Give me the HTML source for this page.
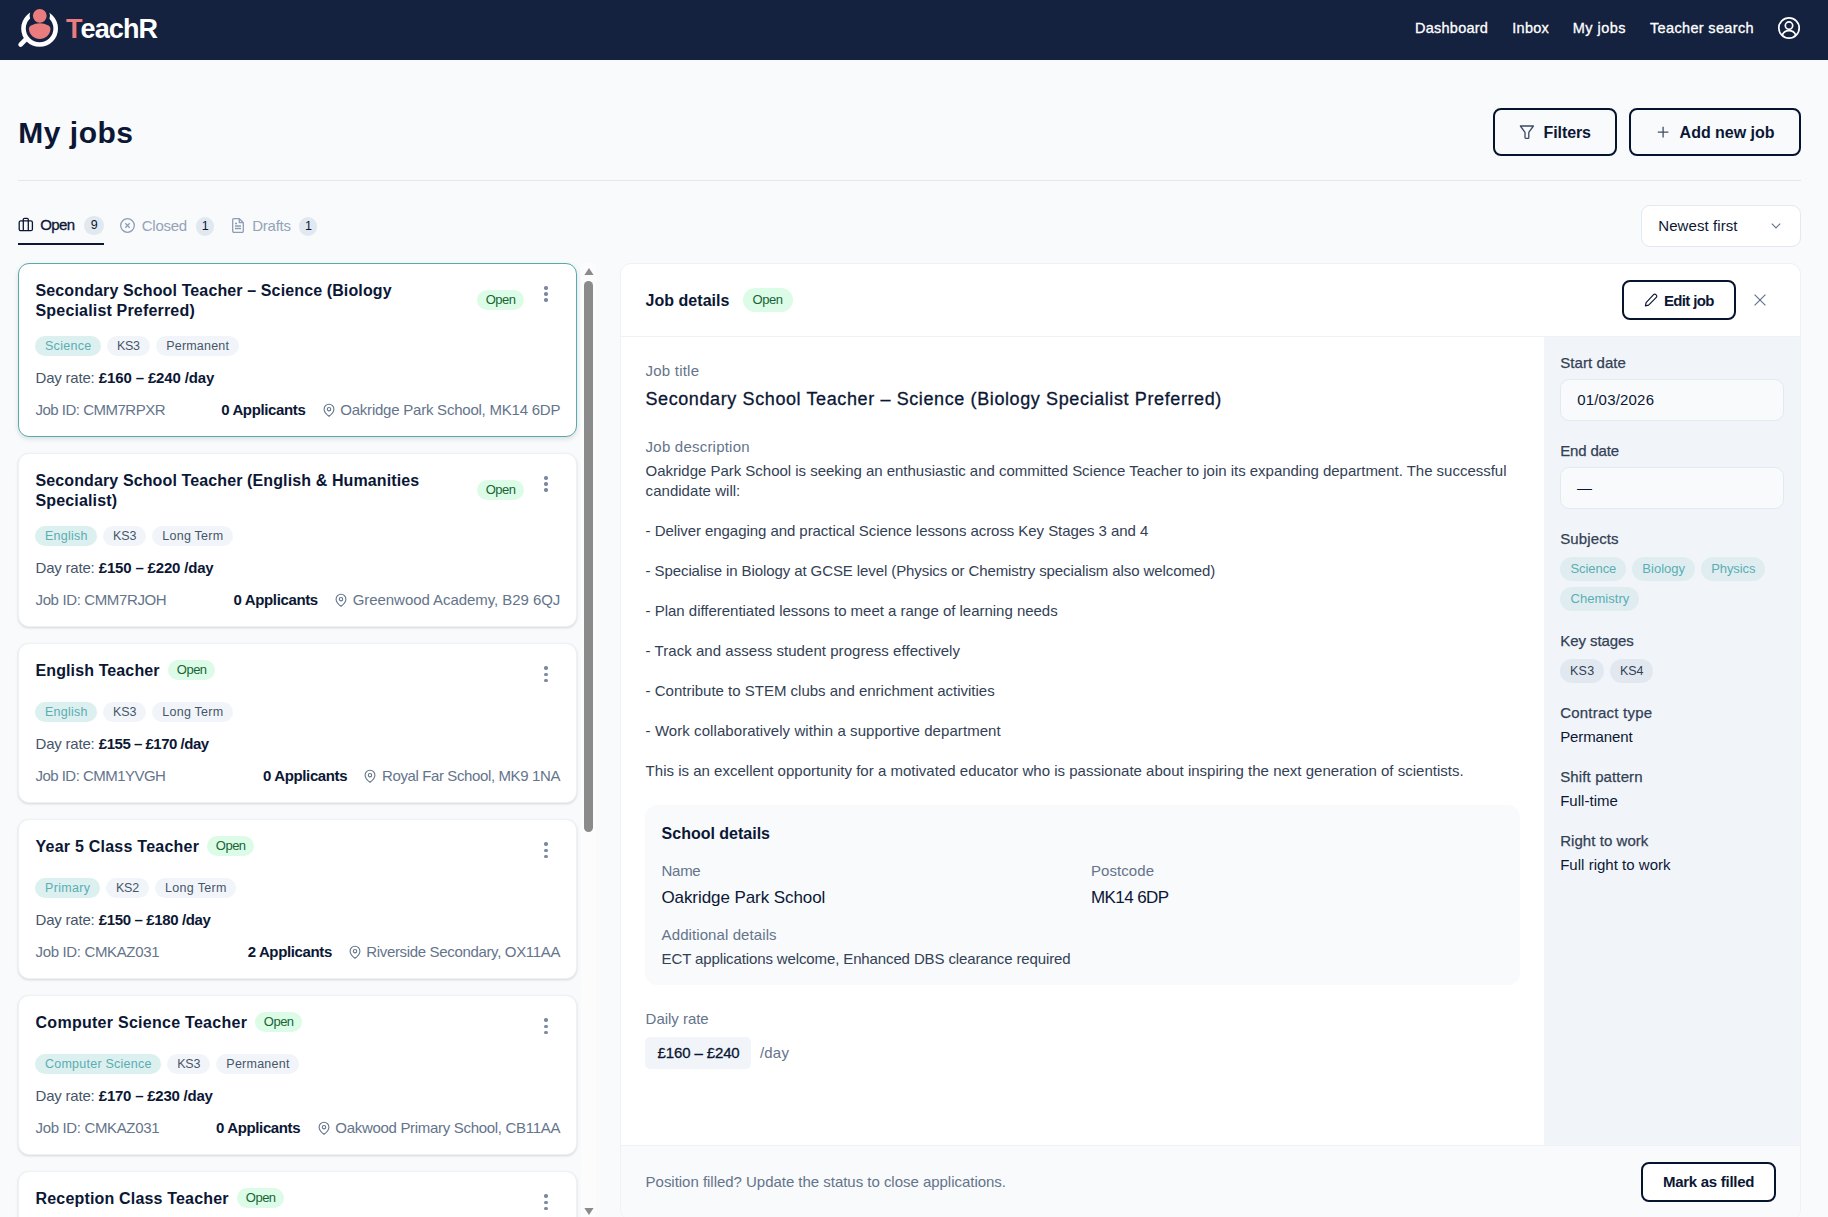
<!DOCTYPE html>
<html lang="en"><head><meta charset="utf-8"><title>TeachR – My jobs</title>
<style>
*{box-sizing:border-box;margin:0;padding:0}
html,body{width:1828px;height:1217px;overflow:hidden;background:#f8fafc}
body{position:relative;font-family:"Liberation Sans",Arial,sans-serif;color:#0b1735;font-size:15px;line-height:20px}
.b,.t,.card,.dot{position:absolute;display:block}
.t{white-space:nowrap;line-height:20px}
.pill{border-radius:12px}
.dot{width:3.400px;height:3.400px;border-radius:50%;background:#7c88a0}
nav{position:absolute;left:0;top:0;width:1828px;height:60px;background:#14213f}
.btn{border:2px solid #06132f;border-radius:8px;background:#f8fafc}
.card{width:559px;background:#fff;border:1px solid #eef2f6;border-radius:11px;box-shadow:0 1px 3px rgba(15,23,42,.10),0 1px 2px rgba(15,23,42,.05)}
.card.sel{border:1px solid #58abab;box-shadow:0 2px 5px rgba(15,23,42,.12)}
svg{overflow:visible}
</style></head><body>

<nav>
<svg class="b" style="left:14px;top:4px" width="50" height="50" viewBox="0 0 50 50">
<circle cx="25.6" cy="24.4" r="16.1" fill="none" stroke="#fff" stroke-width="4.6"/>
<path d="M11.5 35.6 L6.6 40.6" stroke="#fff" stroke-width="4.6" stroke-linecap="round"/>
<circle cx="25.8" cy="11.8" r="10.2" fill="#14213f"/>
<circle cx="25.8" cy="11.8" r="6.9" fill="#ea7c7e"/>
<path d="M17 21.400 Q25.800 17 34.500 21.400 C36.400 22.600 36.600 24 36.400 25.600 C36 31 31.500 35 25.800 35 C20 35 15.500 31 15 25.600 C14.800 24 15 22.600 17 21.400Z" fill="#ea7c7e"/>
</svg>
<span class="t" style="left:66.00px;top:19.00px;font-size:27px;font-weight:700;color:#ea7c7e;">T</span>
<span class="t" style="left:80.60px;top:19.00px;font-size:27px;font-weight:700;color:#ffffff;letter-spacing:-0.912px;">eachR</span>
<span class="t" style="left:1415.00px;top:18.00px;font-size:14.5px;color:#ffffff;letter-spacing:0.245px;-webkit-text-stroke:.3px #fff;">Dashboard</span>
<span class="t" style="left:1512.20px;top:18.00px;font-size:14.5px;color:#ffffff;letter-spacing:0.304px;-webkit-text-stroke:.3px #fff;">Inbox</span>
<span class="t" style="left:1572.70px;top:18.00px;font-size:14.5px;color:#ffffff;letter-spacing:0.489px;-webkit-text-stroke:.3px #fff;">My jobs</span>
<span class="t" style="left:1650.00px;top:18.00px;font-size:14.5px;color:#ffffff;letter-spacing:0.343px;-webkit-text-stroke:.3px #fff;">Teacher search</span>
<svg class="b" style="left:1777px;top:16px" width="24" height="24" viewBox="0 0 24 24" fill="none" stroke="#fff" stroke-width="1.7">
<circle cx="12" cy="12" r="10.2"/><circle cx="12" cy="9.6" r="3.7"/><path d="M5.2 19.4c1.2-3.2 3.8-4.7 6.8-4.7s5.600 1.500 6.800 4.700"/></svg>
</nav>
<span class="t" style="left:18.30px;top:123.00px;font-size:30px;font-weight:700;letter-spacing:0.502px;">My jobs</span>
<div class="b btn" style="left:1493.00px;top:108.00px;width:124.00px;height:48.00px;"></div>
<svg class="b" style="left:1519px;top:124px" width="16" height="16" viewBox="0 0 16 16" fill="none" stroke="#3c4963" stroke-width="1.300" stroke-linejoin="round">
<path d="M1.400 2h13l-4.600 6.300v5.100a.9.9 0 0 1-.9.9h-2a.9.9 0 0 1-.9-.9v-5.100z"/></svg>
<span class="t" style="left:1543.60px;top:123.00px;font-size:16px;font-weight:700;letter-spacing:-0.103px;">Filters</span>
<div class="b btn" style="left:1629.00px;top:108.00px;width:172.00px;height:48.00px;"></div>
<svg class="b" style="left:1657px;top:126px" width="12" height="12" viewBox="0 0 12 12" stroke="#414e67" stroke-width="1.300"><path d="M6.100.8v10.600M.8 6.100h10.600"/></svg>
<span class="t" style="left:1679.60px;top:123.00px;font-size:16px;font-weight:700;letter-spacing:-0.021px;">Add new job</span>
<div class="b" style="left:18.00px;top:180.00px;width:1783.00px;height:1.00px;background:#e2e8f0"></div>
<svg class="b" style="left:18px;top:217px" width="16" height="15" viewBox="0 0 16 15" fill="none" stroke="#0b1735" stroke-width="1.300" stroke-linejoin="round">
<rect x="1.200" y="3.900" width="13.200" height="9.800" rx="1.500"/><path d="M5.300 13.700V2.500a1.200 1.200 0 0 1 1.200-1.200h2.600a1.200 1.200 0 0 1 1.200 1.200V13.700"/></svg>
<span class="t" style="left:40.20px;top:215.00px;font-size:15px;letter-spacing:-0.568px;-webkit-text-stroke:.3px #0b1735;">Open</span>
<div class="b pill" style="left:84.30px;top:215.50px;width:19.50px;height:19.20px;background:#e2e8f0"></div>
<span class="t" style="left:90.80px;top:215.00px;font-size:12.5px;">9</span>
<div class="b" style="left:18.00px;top:243.20px;width:86.00px;height:2.10px;background:#0b1735"></div>
<svg class="b" style="left:120px;top:218.300px" width="15" height="15" viewBox="0 0 15 15" fill="none" stroke="#8e9db3" stroke-width="1.300">
<circle cx="7.5" cy="7.5" r="6.8"/><path d="M5.300 5.300l4.400 4.400M9.700 5.300l-4.400 4.400"/></svg>
<span class="t" style="left:141.80px;top:216.00px;font-size:15px;color:#94a3b8;letter-spacing:-0.261px;">Closed</span>
<div class="b pill" style="left:195.80px;top:216.50px;width:18.40px;height:19.20px;background:#e2e8f0"></div>
<span class="t" style="left:201.80px;top:216.00px;font-size:12.5px;">1</span>
<svg class="b" style="left:232px;top:218px" width="12" height="15" viewBox="0 0 12 15" fill="none" stroke="#8e9db3" stroke-width="1.300" stroke-linejoin="round">
<path d="M.7 1.900a1.200 1.200 0 0 1 1.200-1.200h5.400l4 4v8.400a1.200 1.200 0 0 1-1.200 1.200H1.900a1.200 1.200 0 0 1-1.200-1.200z"/><path d="M7.300.7v4h4M3 8h6M3 10.500h6M3 5.500h2"/></svg>
<span class="t" style="left:252.30px;top:216.00px;font-size:15px;color:#94a3b8;letter-spacing:-0.263px;">Drafts</span>
<div class="b pill" style="left:299.30px;top:216.50px;width:18.00px;height:19.20px;background:#e2e8f0"></div>
<span class="t" style="left:305.00px;top:216.00px;font-size:12.5px;">1</span>
<div class="b" style="left:1641.00px;top:205.00px;width:160.00px;height:42.00px;background:#fff;border:1px solid #e3e9f0;border-radius:9px"></div>
<span class="t" style="left:1658.30px;top:216.00px;font-size:15px;letter-spacing:0.076px;">Newest first</span>
<svg class="b" style="left:1771px;top:222px" width="10" height="8" viewBox="0 0 10 8" fill="none" stroke="#64748b" stroke-width="1.1"><path d="M.8 1.600L5 6l4.200-4.400"/></svg>
<div class="b" style="left:18px;top:263px;width:580px;height:954px">
<div class="card sel" style="left:0;top:0.00px;height:174.00px;"><span class="t" style="left:16.50px;top:17.00px;font-size:16px;font-weight:700;letter-spacing:0.123px;">Secondary School Teacher – Science (Biology</span><span class="t" style="left:16.50px;top:37.00px;font-size:16px;font-weight:700;letter-spacing:0.179px;">Specialist Preferred)</span><div class="b pill" style="left:458.20px;top:26.00px;width:46.70px;height:20.00px;background:#dcfce7;"></div><span class="t" style="left:466.70px;top:26.00px;font-size:13px;color:#166534;letter-spacing:-0.504px;">Open</span><i class="dot" style="left:525.30px;top:22.30px"></i><i class="dot" style="left:525.30px;top:28.30px"></i><i class="dot" style="left:525.30px;top:34.30px"></i><div class="b pill" style="left:16.00px;top:72.40px;width:65.80px;height:19.40px;background:#dbf0ef;"></div><span class="t" style="left:26.00px;top:72.00px;font-size:12.5px;color:#5badb3;letter-spacing:0.286px;">Science</span><div class="b pill" style="left:88.10px;top:72.40px;width:42.50px;height:19.40px;background:#f1f5f9;"></div><span class="t" style="left:98.10px;top:72.00px;font-size:12.5px;color:#475569;letter-spacing:-0.370px;">KS3</span><div class="b pill" style="left:137.20px;top:72.40px;width:82.40px;height:19.40px;background:#f1f5f9;"></div><span class="t" style="left:147.20px;top:72.00px;font-size:12.5px;color:#475569;letter-spacing:0.205px;">Permanent</span><span class="t" style="left:16.50px;top:104.00px;font-size:15px;color:#475569;letter-spacing:-0.207px;">Day rate:</span><span class="t" style="left:79.80px;top:104.00px;font-size:15px;font-weight:700;letter-spacing:-0.134px;">£160 – £240 /day</span><span class="t" style="left:16.50px;top:136.00px;font-size:15px;color:#64748b;letter-spacing:-0.502px;">Job ID: CMM7RPXR</span><span class="t" style="left:202.20px;top:136.00px;font-size:15px;font-weight:700;letter-spacing:-0.367px;">0 Applicants</span><svg class="b" style="left:303.70px;top:139.70px" width="12" height="13" viewBox="0 0 12 13" fill="none" stroke="#64748b" stroke-width="1.1"><path d="M6 12.3C6 12.3 1.1 8.6 1.1 5.2a4.9 4.9 0 0 1 9.8 0C10.900 8.600 6 12.300 6 12.300Z"/><circle cx="6" cy="5.2" r="1.7"/></svg><span class="t" style="left:321.30px;top:136.00px;font-size:15px;color:#64748b;letter-spacing:-0.230px;">Oakridge Park School, MK14 6DP</span></div>
<div class="card" style="left:0;top:190.00px;height:174.00px;"><span class="t" style="left:16.50px;top:17.00px;font-size:16px;font-weight:700;letter-spacing:0.116px;">Secondary School Teacher (English &amp; Humanities</span><span class="t" style="left:16.50px;top:37.00px;font-size:16px;font-weight:700;letter-spacing:0.147px;">Specialist)</span><div class="b pill" style="left:458.20px;top:26.00px;width:46.70px;height:20.00px;background:#dcfce7;"></div><span class="t" style="left:466.70px;top:26.00px;font-size:13px;color:#166534;letter-spacing:-0.504px;">Open</span><i class="dot" style="left:525.30px;top:22.30px"></i><i class="dot" style="left:525.30px;top:28.30px"></i><i class="dot" style="left:525.30px;top:34.30px"></i><div class="b pill" style="left:16.00px;top:72.40px;width:62.00px;height:19.40px;background:#dbf0ef;"></div><span class="t" style="left:26.00px;top:72.00px;font-size:12.5px;color:#5badb3;letter-spacing:0.233px;">English</span><div class="b pill" style="left:84.00px;top:72.40px;width:43.00px;height:19.40px;background:#f1f5f9;"></div><span class="t" style="left:94.00px;top:72.00px;font-size:12.5px;color:#475569;letter-spacing:-0.120px;">KS3</span><div class="b pill" style="left:133.30px;top:72.40px;width:80.40px;height:19.40px;background:#f1f5f9;"></div><span class="t" style="left:143.30px;top:72.00px;font-size:12.5px;color:#475569;letter-spacing:0.245px;">Long Term</span><span class="t" style="left:16.50px;top:104.00px;font-size:15px;color:#475569;letter-spacing:-0.207px;">Day rate:</span><span class="t" style="left:79.80px;top:104.00px;font-size:15px;font-weight:700;letter-spacing:-0.181px;">£150 – £220 /day</span><span class="t" style="left:16.50px;top:136.00px;font-size:15px;color:#64748b;letter-spacing:-0.366px;">Job ID: CMM7RJOH</span><span class="t" style="left:214.60px;top:136.00px;font-size:15px;font-weight:700;letter-spacing:-0.367px;">0 Applicants</span><svg class="b" style="left:315.70px;top:139.70px" width="12" height="13" viewBox="0 0 12 13" fill="none" stroke="#64748b" stroke-width="1.1"><path d="M6 12.3C6 12.3 1.1 8.6 1.1 5.2a4.9 4.9 0 0 1 9.8 0C10.900 8.600 6 12.300 6 12.300Z"/><circle cx="6" cy="5.2" r="1.7"/></svg><span class="t" style="left:333.70px;top:136.00px;font-size:15px;color:#64748b;letter-spacing:-0.053px;">Greenwood Academy, B29 6QJ</span></div>
<div class="card" style="left:0;top:380.00px;height:160.00px;"><span class="t" style="left:16.50px;top:17.00px;font-size:16px;font-weight:700;letter-spacing:0.114px;">English Teacher</span><div class="b pill" style="left:149.30px;top:16.00px;width:46.70px;height:20.00px;background:#dcfce7;"></div><span class="t" style="left:157.80px;top:16.00px;font-size:13px;color:#166534;letter-spacing:-0.504px;">Open</span><i class="dot" style="left:525.30px;top:22.30px"></i><i class="dot" style="left:525.30px;top:28.60px"></i><i class="dot" style="left:525.30px;top:34.80px"></i><div class="b pill" style="left:16.00px;top:58.40px;width:62.00px;height:19.40px;background:#dbf0ef;"></div><span class="t" style="left:26.00px;top:58.00px;font-size:12.5px;color:#5badb3;letter-spacing:0.233px;">English</span><div class="b pill" style="left:84.00px;top:58.40px;width:43.00px;height:19.40px;background:#f1f5f9;"></div><span class="t" style="left:94.00px;top:58.00px;font-size:12.5px;color:#475569;letter-spacing:-0.120px;">KS3</span><div class="b pill" style="left:133.30px;top:58.40px;width:80.40px;height:19.40px;background:#f1f5f9;"></div><span class="t" style="left:143.30px;top:58.00px;font-size:12.5px;color:#475569;letter-spacing:0.245px;">Long Term</span><span class="t" style="left:16.50px;top:90.00px;font-size:15px;color:#475569;letter-spacing:-0.207px;">Day rate:</span><span class="t" style="left:79.80px;top:90.00px;font-size:15px;font-weight:700;letter-spacing:-0.481px;">£155 – £170 /day</span><span class="t" style="left:16.50px;top:122.00px;font-size:15px;color:#64748b;letter-spacing:-0.532px;">Job ID: CMM1YVGH</span><span class="t" style="left:244.00px;top:122.00px;font-size:15px;font-weight:700;letter-spacing:-0.367px;">0 Applicants</span><svg class="b" style="left:345.00px;top:125.70px" width="12" height="13" viewBox="0 0 12 13" fill="none" stroke="#64748b" stroke-width="1.1"><path d="M6 12.3C6 12.3 1.1 8.6 1.1 5.2a4.9 4.9 0 0 1 9.8 0C10.900 8.600 6 12.300 6 12.300Z"/><circle cx="6" cy="5.2" r="1.7"/></svg><span class="t" style="left:363.00px;top:122.00px;font-size:15px;color:#64748b;letter-spacing:-0.382px;">Royal Far School, MK9 1NA</span></div>
<div class="card" style="left:0;top:556.00px;height:160.00px;"><span class="t" style="left:16.50px;top:17.00px;font-size:16px;font-weight:700;letter-spacing:0.236px;">Year 5 Class Teacher</span><div class="b pill" style="left:188.30px;top:16.00px;width:46.70px;height:20.00px;background:#dcfce7;"></div><span class="t" style="left:196.80px;top:16.00px;font-size:13px;color:#166534;letter-spacing:-0.504px;">Open</span><i class="dot" style="left:525.30px;top:22.30px"></i><i class="dot" style="left:525.30px;top:28.60px"></i><i class="dot" style="left:525.30px;top:34.80px"></i><div class="b pill" style="left:16.00px;top:58.40px;width:64.70px;height:19.40px;background:#dbf0ef;"></div><span class="t" style="left:26.00px;top:58.00px;font-size:12.5px;color:#5badb3;letter-spacing:0.340px;">Primary</span><div class="b pill" style="left:87.00px;top:58.40px;width:42.70px;height:19.40px;background:#f1f5f9;"></div><span class="t" style="left:97.00px;top:58.00px;font-size:12.5px;color:#475569;letter-spacing:-0.270px;">KS2</span><div class="b pill" style="left:136.00px;top:58.40px;width:81.00px;height:19.40px;background:#f1f5f9;"></div><span class="t" style="left:146.00px;top:58.00px;font-size:12.5px;color:#475569;letter-spacing:0.320px;">Long Term</span><span class="t" style="left:16.50px;top:90.00px;font-size:15px;color:#475569;letter-spacing:-0.207px;">Day rate:</span><span class="t" style="left:79.80px;top:90.00px;font-size:15px;font-weight:700;letter-spacing:-0.367px;">£150 – £180 /day</span><span class="t" style="left:16.50px;top:122.00px;font-size:15px;color:#64748b;letter-spacing:-0.348px;">Job ID: CMKAZ031</span><span class="t" style="left:228.70px;top:122.00px;font-size:15px;font-weight:700;letter-spacing:-0.367px;">2 Applicants</span><svg class="b" style="left:330.00px;top:125.70px" width="12" height="13" viewBox="0 0 12 13" fill="none" stroke="#64748b" stroke-width="1.1"><path d="M6 12.3C6 12.3 1.1 8.6 1.1 5.2a4.9 4.9 0 0 1 9.8 0C10.900 8.600 6 12.300 6 12.300Z"/><circle cx="6" cy="5.2" r="1.7"/></svg><span class="t" style="left:347.30px;top:122.00px;font-size:15px;color:#64748b;letter-spacing:-0.338px;">Riverside Secondary, OX11AA</span></div>
<div class="card" style="left:0;top:732.00px;height:160.00px;"><span class="t" style="left:16.50px;top:17.00px;font-size:16px;font-weight:700;letter-spacing:0.274px;">Computer Science Teacher</span><div class="b pill" style="left:236.30px;top:16.00px;width:46.70px;height:20.00px;background:#dcfce7;"></div><span class="t" style="left:244.80px;top:16.00px;font-size:13px;color:#166534;letter-spacing:-0.504px;">Open</span><i class="dot" style="left:525.30px;top:22.30px"></i><i class="dot" style="left:525.30px;top:28.60px"></i><i class="dot" style="left:525.30px;top:34.80px"></i><div class="b pill" style="left:16.00px;top:58.40px;width:126.00px;height:19.40px;background:#dbf0ef;"></div><span class="t" style="left:26.00px;top:58.00px;font-size:12.5px;color:#5badb3;letter-spacing:0.238px;">Computer Science</span><div class="b pill" style="left:148.30px;top:58.40px;width:42.70px;height:19.40px;background:#f1f5f9;"></div><span class="t" style="left:158.30px;top:58.00px;font-size:12.5px;color:#475569;letter-spacing:-0.270px;">KS3</span><div class="b pill" style="left:197.30px;top:58.40px;width:82.70px;height:19.40px;background:#f1f5f9;"></div><span class="t" style="left:207.30px;top:58.00px;font-size:12.5px;color:#475569;letter-spacing:0.243px;">Permanent</span><span class="t" style="left:16.50px;top:90.00px;font-size:15px;color:#475569;letter-spacing:-0.207px;">Day rate:</span><span class="t" style="left:79.80px;top:90.00px;font-size:15px;font-weight:700;letter-spacing:-0.234px;">£170 – £230 /day</span><span class="t" style="left:16.50px;top:122.00px;font-size:15px;color:#64748b;letter-spacing:-0.348px;">Job ID: CMKAZ031</span><span class="t" style="left:197.00px;top:122.00px;font-size:15px;font-weight:700;letter-spacing:-0.367px;">0 Applicants</span><svg class="b" style="left:299.00px;top:125.70px" width="12" height="13" viewBox="0 0 12 13" fill="none" stroke="#64748b" stroke-width="1.1"><path d="M6 12.3C6 12.3 1.1 8.6 1.1 5.2a4.9 4.9 0 0 1 9.8 0C10.900 8.600 6 12.300 6 12.300Z"/><circle cx="6" cy="5.2" r="1.7"/></svg><span class="t" style="left:316.30px;top:122.00px;font-size:15px;color:#64748b;letter-spacing:-0.307px;">Oakwood Primary School, CB11AA</span></div>
<div class="card" style="left:0;top:908.00px;height:160.00px;"><span class="t" style="left:16.50px;top:17.00px;font-size:16px;font-weight:700;letter-spacing:0.177px;">Reception Class Teacher</span><div class="b pill" style="left:218.30px;top:16.00px;width:46.70px;height:20.00px;background:#dcfce7;"></div><span class="t" style="left:226.80px;top:16.00px;font-size:13px;color:#166534;letter-spacing:-0.504px;">Open</span><i class="dot" style="left:525.30px;top:22.30px"></i><i class="dot" style="left:525.30px;top:28.60px"></i><i class="dot" style="left:525.30px;top:34.80px"></i></div>
<div class="b" style="left:563.00px;top:0.00px;width:15.00px;height:954.00px;background:#fcfcfc"></div>
<svg class="b" style="left:566px;top:5px" width="10" height="7" viewBox="0 0 10 7"><path d="M5 0L9.600 7H.4z" fill="#8b8b8b"/></svg>
<div class="b" style="left:566.00px;top:18.00px;width:9.00px;height:551.00px;background:#8b8b8b;border-radius:4.500px"></div>
<svg class="b" style="left:566px;top:945px" width="10" height="7" viewBox="0 0 10 7"><path d="M5 7L9.600 0H.4z" fill="#8b8b8b"/></svg>
</div>
<div class="b" style="left:620px;top:263px;width:1181px;height:957px;background:#fff;border:1px solid #eef2f6;border-radius:11px;overflow:hidden">
<span class="t" style="left:24.60px;top:27.00px;font-size:16px;font-weight:700;letter-spacing:0.022px;">Job details</span>
<div class="b pill" style="left:121.50px;top:24.40px;width:50.00px;height:23.40px;background:#dcfce7;"></div><span class="t" style="left:131.50px;top:26.00px;font-size:13px;color:#166534;letter-spacing:-0.471px;">Open</span>
<div class="b btn" style="left:1001.00px;top:16.00px;width:114.00px;height:40.00px;background:#fff"></div>
<svg class="b" style="left:1022.50px;top:29.00px" width="14" height="14" viewBox="0 0 14 14" fill="none" stroke="#0b1735" stroke-width="1.2" stroke-linejoin="round">
<path d="M9.600 1.700a1.600 1.600 0 0 1 2.300 0l.4.4a1.600 1.600 0 0 1 0 2.300L4.600 12.100l-3.200.7.700-3.200z"/></svg>
<span class="t" style="left:1043.00px;top:27.00px;font-size:15px;font-weight:700;letter-spacing:-0.657px;">Edit job</span>
<svg class="b" style="left:1133.20px;top:30.40px" width="12" height="12" viewBox="0 0 12 12" stroke="#64748b" stroke-width="1.2"><path d="M.6.6l10.800 10.800M11.400.6L.6 11.400"/></svg>
<div class="b" style="left:0.00px;top:72.00px;width:1179.00px;height:1.00px;background:#eef2f6"></div>
<div class="b" style="left:923.00px;top:73.00px;width:256.00px;height:808.00px;background:#f1f5f9"></div>
<div class="b" style="left:0.00px;top:881.00px;width:1179.00px;height:73.00px;background:#f8fafc;border-top:1px solid #eef2f6"></div>
<span class="t" style="left:24.60px;top:97.00px;font-size:15px;color:#64748b;letter-spacing:0.212px;">Job title</span>
<span class="t" style="left:24.40px;top:125.00px;font-size:18px;letter-spacing:0.609px;-webkit-text-stroke:.3px #0b1735;">Secondary School Teacher – Science (Biology Specialist Preferred)</span>
<span class="t" style="left:24.60px;top:173.00px;font-size:15px;color:#64748b;letter-spacing:0.221px;">Job description</span>
<span class="t" style="left:24.60px;top:197.00px;font-size:15px;color:#334155;letter-spacing:-0.019px;">Oakridge Park School is seeking an enthusiastic and committed Science Teacher to join its expanding department. The successful</span>
<span class="t" style="left:24.60px;top:217.00px;font-size:15px;color:#334155;letter-spacing:0.034px;">candidate will:</span>
<span class="t" style="left:24.60px;top:257.00px;font-size:15px;color:#334155;letter-spacing:-0.058px;">- Deliver engaging and practical Science lessons across Key Stages 3 and 4</span>
<span class="t" style="left:24.60px;top:297.00px;font-size:15px;color:#334155;letter-spacing:-0.095px;">- Specialise in Biology at GCSE level (Physics or Chemistry specialism also welcomed)</span>
<span class="t" style="left:24.60px;top:337.00px;font-size:15px;color:#334155;letter-spacing:-0.020px;">- Plan differentiated lessons to meet a range of learning needs</span>
<span class="t" style="left:24.60px;top:377.00px;font-size:15px;color:#334155;letter-spacing:0.044px;">- Track and assess student progress effectively</span>
<span class="t" style="left:24.60px;top:417.00px;font-size:15px;color:#334155;letter-spacing:-0.004px;">- Contribute to STEM clubs and enrichment activities</span>
<span class="t" style="left:24.60px;top:457.00px;font-size:15px;color:#334155;letter-spacing:0.068px;">- Work collaboratively within a supportive department</span>
<span class="t" style="left:24.60px;top:497.00px;font-size:15px;color:#334155;letter-spacing:0.014px;">This is an excellent opportunity for a motivated educator who is passionate about inspiring the next generation of scientists.</span>
<div class="b" style="left:24.00px;top:541.00px;width:875.00px;height:180.00px;background:#f8fafc;border-radius:12px"></div>
<span class="t" style="left:40.60px;top:560.00px;font-size:16px;font-weight:700;letter-spacing:-0.005px;">School details</span>
<span class="t" style="left:40.60px;top:597.00px;font-size:15px;color:#64748b;letter-spacing:-0.305px;">Name</span>
<span class="t" style="left:40.40px;top:624.00px;font-size:17px;letter-spacing:-0.072px;">Oakridge Park School</span>
<span class="t" style="left:470.00px;top:597.00px;font-size:15px;color:#64748b;letter-spacing:0.065px;">Postcode</span>
<span class="t" style="left:470.00px;top:624.00px;font-size:17px;letter-spacing:-0.586px;">MK14 6DP</span>
<span class="t" style="left:40.60px;top:661.00px;font-size:15px;color:#64748b;letter-spacing:0.093px;">Additional details</span>
<span class="t" style="left:40.60px;top:685.00px;font-size:15px;color:#334155;letter-spacing:-0.121px;">ECT applications welcome, Enhanced DBS clearance required</span>
<span class="t" style="left:24.60px;top:745.00px;font-size:15px;color:#64748b;letter-spacing:-0.029px;">Daily rate</span>
<div class="b" style="left:24.00px;top:773.00px;width:106.00px;height:31.60px;background:#f1f5f9;border-radius:5px"></div>
<span class="t" style="left:36.60px;top:779.00px;font-size:15px;letter-spacing:-0.132px;-webkit-text-stroke:.3px #0b1735;">£160 – £240</span>
<span class="t" style="left:139.00px;top:779.00px;font-size:15px;color:#64748b;letter-spacing:0.180px;">/day</span>
<span class="t" style="left:24.60px;top:908.00px;font-size:15px;color:#64748b;letter-spacing:-0.027px;">Position filled? Update the status to close applications.</span>
<div class="b btn" style="left:1020.00px;top:898.00px;width:135.00px;height:40.00px;background:#fff"></div>
<span class="t" style="left:1042.00px;top:908.00px;font-size:15px;font-weight:700;letter-spacing:-0.281px;">Mark as filled</span>
<span class="t" style="left:939.20px;top:89.00px;font-size:15px;color:#334155;letter-spacing:0.073px;-webkit-text-stroke:.25px #334155;">Start date</span>
<div class="b" style="left:939.00px;top:115.00px;width:224.00px;height:42.00px;background:#f8fafc;border:1px solid #e3e9f0;border-radius:9px"></div>
<span class="t" style="left:956.20px;top:126.00px;font-size:15px;letter-spacing:0.191px;">01/03/2026</span>
<span class="t" style="left:939.20px;top:177.00px;font-size:15px;color:#334155;letter-spacing:-0.166px;-webkit-text-stroke:.25px #334155;">End date</span>
<div class="b" style="left:939.00px;top:203.00px;width:224.00px;height:42.00px;background:#f8fafc;border:1px solid #e3e9f0;border-radius:9px"></div>
<span class="t" style="left:956.00px;top:214.00px;font-size:15px;">—</span>
<span class="t" style="left:939.20px;top:265.00px;font-size:15px;color:#334155;letter-spacing:0.122px;-webkit-text-stroke:.25px #334155;">Subjects</span>
<div class="b pill" style="left:939.00px;top:293.00px;width:66.00px;height:24.00px;background:#dfedf1;"></div><span class="t" style="left:949.50px;top:295.00px;font-size:13px;color:#5badb3;letter-spacing:-0.075px;">Science</span>
<div class="b pill" style="left:1011.00px;top:293.00px;width:63.00px;height:24.00px;background:#dfedf1;"></div><span class="t" style="left:1021.30px;top:295.00px;font-size:13px;color:#5badb3;letter-spacing:0.027px;">Biology</span>
<div class="b pill" style="left:1080.00px;top:293.00px;width:64.00px;height:24.00px;background:#dfedf1;"></div><span class="t" style="left:1090.20px;top:295.00px;font-size:13px;color:#5badb3;letter-spacing:-0.099px;">Physics</span>
<div class="b pill" style="left:939.00px;top:323.00px;width:79.00px;height:24.00px;background:#dfedf1;"></div><span class="t" style="left:949.50px;top:325.00px;font-size:13px;color:#5badb3;letter-spacing:0.036px;">Chemistry</span>
<span class="t" style="left:939.20px;top:367.00px;font-size:15px;color:#334155;letter-spacing:-0.058px;-webkit-text-stroke:.25px #334155;">Key stages</span>
<div class="b pill" style="left:939.00px;top:395.00px;width:44.00px;height:24.00px;background:#e2e8f0;"></div><span class="t" style="left:949.00px;top:397.00px;font-size:12.5px;color:#334155;letter-spacing:0.230px;">KS3</span>
<div class="b pill" style="left:989.00px;top:395.00px;width:43.00px;height:24.00px;background:#e2e8f0;"></div><span class="t" style="left:999.00px;top:397.00px;font-size:12.5px;color:#334155;letter-spacing:-0.120px;">KS4</span>
<span class="t" style="left:939.20px;top:439.00px;font-size:15px;color:#334155;letter-spacing:0.223px;-webkit-text-stroke:.25px #334155;">Contract type</span>
<span class="t" style="left:939.20px;top:463.00px;font-size:15px;letter-spacing:-0.122px;">Permanent</span>
<span class="t" style="left:939.20px;top:503.00px;font-size:15px;color:#334155;letter-spacing:0.126px;-webkit-text-stroke:.25px #334155;">Shift pattern</span>
<span class="t" style="left:939.20px;top:527.00px;font-size:15px;letter-spacing:0.023px;">Full-time</span>
<span class="t" style="left:939.20px;top:567.00px;font-size:15px;color:#334155;letter-spacing:0.054px;-webkit-text-stroke:.25px #334155;">Right to work</span>
<span class="t" style="left:939.20px;top:591.00px;font-size:15px;letter-spacing:0.021px;">Full right to work</span>
</div>
</body></html>
